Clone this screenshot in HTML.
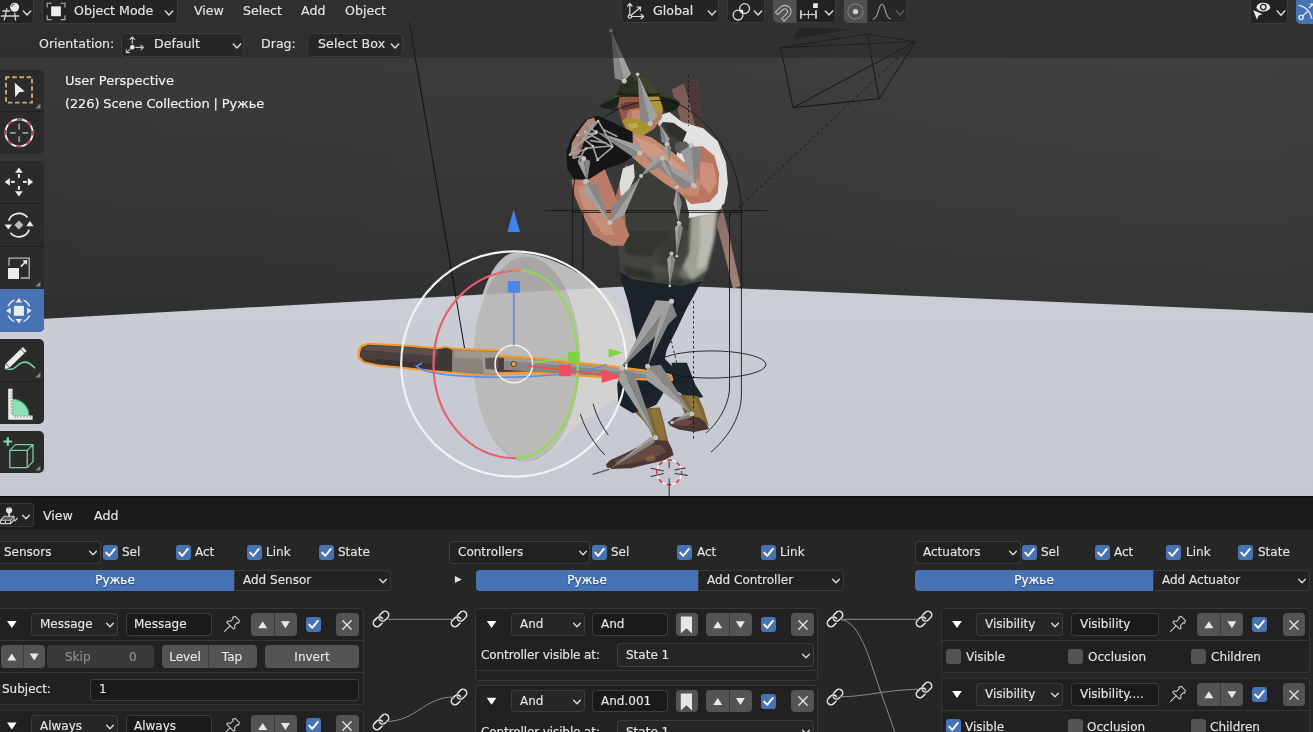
<!DOCTYPE html>
<html lang="en">
<head>
<meta charset="utf-8">
<title>UPBGE - Logic Editor</title>
<style>
html,body{margin:0;padding:0;background:#262626;}
body{width:1313px;height:732px;overflow:hidden;position:relative;font-family:"DejaVu Sans","Liberation Sans",sans-serif;font-size:12px;color:#e6e6e6;-webkit-font-smoothing:antialiased;}
.abs{position:absolute;}
#vp{position:absolute;left:0;top:0;width:1313px;height:496px;overflow:hidden;background:#333;}
#scene{position:absolute;left:0;top:0;}
#hdr{position:absolute;left:0;top:0;width:1313px;height:58px;background:rgba(38,38,38,0.55);}
.btn{position:absolute;box-sizing:border-box;background:#242424;border:1px solid #3a3a3a;border-radius:4px;height:24px;top:-1px;}
.t{position:absolute;white-space:nowrap;line-height:16px;will-change:transform;-webkit-text-stroke:0.14px currentColor;}
.chev{position:absolute;width:8px;height:5px;}
#le{position:absolute;left:0;top:496px;width:1313px;height:236px;background:#262626;overflow:hidden;}
#lehdr{position:absolute;left:0;top:0;width:1313px;height:34px;background:#1b1b1b;border-top:2px solid #0e0e0e;box-sizing:border-box;}
</style>
</head>
<body>
<div id="vp">
<svg id="scene" width="1313" height="496" viewBox="0 0 1313 496">
<defs>
<linearGradient id="sky" x1="0" y1="0" x2="0" y2="1">
<stop offset="0" stop-color="#3e3e3e"/><stop offset="0.18" stop-color="#3d3d3d"/><stop offset="0.6" stop-color="#393939"/><stop offset="1" stop-color="#323232"/>
</linearGradient>
<linearGradient id="gnd" gradientUnits="userSpaceOnUse" x1="0" y1="285" x2="0" y2="496"><stop offset="0" stop-color="#cbced5"/><stop offset="1" stop-color="#c5c8d0"/></linearGradient>
<linearGradient id="skyx" x1="0" y1="0" x2="1" y2="0"><stop offset="0" stop-color="#000" stop-opacity="0.07"/><stop offset="0.45" stop-color="#000" stop-opacity="0.03"/><stop offset="1" stop-color="#fff" stop-opacity="0.012"/></linearGradient>
</defs>
<rect x="0" y="0" width="1313" height="330" fill="url(#sky)"/><rect x="0" y="0" width="1313" height="330" fill="url(#skyx)"/>
<polygon points="0,321.3 657,284.8 1313,313 1313,496 0,496" fill="url(#gnd)"/>
<g fill="none" stroke="#161616" stroke-width="1">
<polygon points="780.7,47.6 867.2,34.1 879.2,98.7 793.0,107.7"/>
<line x1="915.3" y1="41.6" x2="780.7" y2="47.6"/>
<line x1="915.3" y1="41.6" x2="867.2" y2="34.1"/>
<line x1="915.3" y1="41.6" x2="879.2" y2="98.7"/>
<line x1="915.3" y1="41.6" x2="793.0" y2="107.7"/>
</g>
<polygon points="798.7,28.1 851.3,29.0 792.1,39.8" fill="#262626" />
<line x1="915.3" y1="41.6" x2="729.0" y2="216.8" stroke="#161616" stroke-width="1" stroke-dasharray="3 3"/>
<line x1="729.0" y1="216.8" x2="722.0" y2="222.0" stroke="#161616" stroke-width="1" stroke-dasharray="3 3"/>
<line x1="409.3" y1="22.0" x2="464.5" y2="348.0" stroke="#101010" stroke-width="1" /><g>
<path d="M516.3 252.5 C557.3 254.1 606.5 284.1 633.6 327.9 L637.7 339.4 627.0 392.7 571.7 428.8 C559.4 446.0 547.1 459.1 532.7 462.4 C497.9 462.4 473.3 413.2 473.3 362.0 C473.3 302.5 492.5 252.5 516.3 252.5 Z" fill="#d5d3d0" stroke="none" stroke-width="1" fill-opacity="0.86"/>
<ellipse cx="526.6" cy="359.1" rx="53.3" ry="102.5" fill="#000" fill-opacity="0.115" filter="url(#soft)"/>
</g><defs><linearGradient id="rf" x1="0" y1="0" x2="0" y2="1"><stop offset="0" stop-color="#7a5a57"/><stop offset="0.45" stop-color="#84645f"/><stop offset="1" stop-color="#a08278"/></linearGradient><filter id="soft" x="-5%" y="-5%" width="110%" height="110%"><feGaussianBlur stdDeviation="0.7"/></filter><filter id="soft2" x="-10%" y="-10%" width="120%" height="120%"><feGaussianBlur stdDeviation="1.6"/></filter></defs>
<g filter="url(#soft)">
<polygon points="671.5,89.5 692,79.6 697,81.5 701,112 706,140 717,186 729,235 740.5,286 733,288.5 724,252 714,215 702,180 690,150 680,118" fill="url(#rf)"/>
<polygon points="684,83.5 692,79.6 697,81.5 701,112 706,140 712,166 704,160 696,130 690,105" fill="#3f2c2c" opacity="0.75"/>
<polygon points="620.1,272.1 702.1,279.8 696.0,291.8 686.3,309.3 676.9,329.0 667.1,348.6 662.7,366.1 632.1,366.1 636.9,342.1 633.2,318.0 625.6,294.0" fill="#1e242b" />
<polygon points="620.3,278.7 697.5,281.4 686.2,307.4 676.0,327.2 666.1,347.4 665.0,359.0 676.0,370.3 686.2,384.6 690.3,395.2 676.7,391.8 666.4,386.0 661.6,396.2 656.2,404.8 643.2,410.6 632.9,413.3 618.6,404.8 617.2,384.6 622.0,366.2 637.4,344.6 632.9,324.5 627.5,298.5" fill="#1d232a" />
<polygon points="671.5,362.7 686.9,362.7 695.4,385.0 703.3,396.9 686.9,400.3 675.0,386.7" fill="#1f252c" />
<polygon points="677.4,394.5 697.9,395.9 703.4,408.2 708.8,426.0 699.3,419.1 685.6,416.4 681.5,405.5" fill="#7d6636" />
<polygon points="685.6,395.9 693.8,395.9 699.3,408.2 704.7,420.5 696.5,417.8" fill="#94793f" opacity="0.7"/>
<polygon points="667.6,422.5 674.0,417.5 685.6,416.1 699.3,417.5 706.1,423.2 709.1,429.0 693.8,432.0 678.8,429.5 670.6,426.0" fill="#4e3532" />
<polygon points="672.0,420.5 685.6,418.4 693.8,421.9 685.6,426.0 674.7,424.6" fill="#6e504a" opacity="0.8"/>
<polygon points="635.1,412.6 648.7,407.9 659.9,407.6 664.4,424.6 668.1,441.0 661.0,445.1 654.2,441.0 650.1,430.1 643.3,420.5" fill="#7d6636" />
<polygon points="650.1,409.6 659.0,408.5 663.1,424.6 665.9,439.6 661.0,441.0 655.6,427.3" fill="#94793f" opacity="0.7"/>
<polygon points="606.1,464.2 610.5,460.1 625.5,453.3 641.9,445.1 654.2,439.9 668.1,441.0 672.0,449.2 673.6,454.9 663.8,460.4 647.4,464.2 631.0,468.3 610.5,469.1 606.7,467.2" fill="#4e3532" />
<polygon points="614.6,460.1 631.0,453.3 647.4,445.1 661.0,445.1 666.5,451.9 654.2,457.4 635.1,462.8 617.3,465.6" fill="#6e504a" opacity="0.75"/>
<polygon points="644.6,457.4 654.2,454.6 655.6,460.1 647.4,462.1" fill="#8a6d45" opacity="0.7"/>
<polygon points="620.1,210.9 625.6,195.6 722.8,195.6 721.3,208.7 717.4,224.0 711.3,254.6 703.2,280.4 682.4,285.7 654.0,282.6 632.1,279.1 620.3,272.1 618.6,243.7" fill="#43453e" />
<polygon points="662.7,195.6 722.8,195.6 721.3,208.7 713.0,213.6 699.9,215.3 682.4,208.7 669.3,204.4" fill="#d9d9d2" />
</g>
<g filter="url(#soft2)">
<polygon points="691.1,208.7 718.5,204.4 714.3,239.3 706.9,269.9 693.3,280.0 678.0,276.9 689.0,252.5" fill="#a8a89e" opacity="0.9"/>
<polygon points="699.9,215.3 715.6,210.9 712.6,243.7 706.0,265.6 696.6,269.9 699.9,243.7" fill="#c2c2ba" opacity="0.8"/>
<polygon points="623.4,213.1 651.8,208.7 669.3,230.6 651.8,256.8 625.6,254.6" fill="#30322c" opacity="0.85"/>
<polygon points="662.7,208.7 682.4,206.6 682.4,243.7 669.3,272.1 658.4,265.6" fill="#34362f" opacity="0.7"/>
<polygon points="622.3,265.6 651.8,272.1 682.4,275.4 682.4,284.2 654.0,281.3 625.6,275.4" fill="#2a2c27" opacity="0.8"/>
<polygon points="651.8,265.6 682.4,265.6 691.1,279.1 654.0,281.3" fill="#55574e" opacity="0.6"/>
</g>
<g filter="url(#soft)">
<polygon points="625.6,164.9 635.4,169.3 633.2,184.6 627.8,213.0 625.6,241.4 612.5,243.6 609.2,217.4 617.9,189.0" fill="#a96c59" />
<polygon points="654.0,117.3 669.3,112.0 682.4,122.3 703.2,128.2 717.8,141.3 726.1,162.7 727.9,183.5 724.4,203.2 714.1,213.0 691.1,217.4 673.7,220.7 662.7,226.1 625.6,226.1 625.6,199.9 632.1,173.7 647.4,151.8 662.7,132.1" fill="#e2e2e0" />
<polygon points="625.6,230.5 624.7,199.9 629.5,178.0 636.9,162.7 647.4,147.4 656.2,132.1 662.7,122.3 673.7,123.0 682.4,132.1 679.1,147.4 673.7,162.7 678.0,182.4 685.7,199.9 689.0,213.0 687.9,230.5" fill="#3b3d37" />
<polygon points="622.8,168.4 633.7,164.0 634.8,177.1 627.1,194.6 620.6,195.7 619.5,183.7" fill="#dcdcd8" />
<polygon points="662.7,122.3 673.7,123.0 686.8,132.1 682.4,143.1 669.3,134.3" fill="#2e332d" />
<polygon points="688.5,147.4 702.5,146.1 714.3,155.7 719.3,173.7 717.8,192.9 709.5,202.1 691.1,204.3 679.8,193.3 682.4,169.3" fill="#b8745f" />
<polygon points="699.9,161.6 713.4,163.8 716.5,182.4 709.5,194.4 699.9,182.4" fill="#d69a88" opacity="0.7"/>
<polygon points="629.5,131.0 651.8,137.6 673.7,152.9 691.6,169.3 701.0,183.5 697.7,196.6 682.4,194.4 664.9,183.5 647.4,170.4 632.1,157.3 624.7,151.8" fill="#c48a72" />
<polygon points="634.3,136.5 654.0,144.2 673.7,159.5 689.0,173.7 682.4,175.8 662.7,164.9 643.1,151.8" fill="#dba88f" opacity="0.55"/>
<polygon points="619.3,96.9 618.5,106.7 620.7,115.3 623.2,123.9 630.6,131.3 644.1,135.0 653.9,128.9 661.9,117.8 662.5,106.7 658.9,95.7 639.2,93.2" fill="#b47c64" />
<polygon points="619.3,96.9 618.5,106.7 620.7,115.3 623.2,123.9 626.9,126.4 626.9,114.1 630.6,106.7 641.6,101.8 639.2,95.7" fill="#94594a" />
<polygon points="620.7,104.3 630.6,101.8 641.6,102.4 641.6,107.3 630.6,109.2 622.2,110.4" fill="#6b3a34" />
<polygon points="631.8,111.6 641.6,109.2 647.8,117.8 641.6,123.9 631.8,121.5" fill="#c98f78" opacity="0.8"/>
<polygon points="649.0,95.0 658.9,94.4 662.8,104.3 662.5,112.9 656.4,114.1 651.5,106.7" fill="#b09638" />
<polygon points="622.2,120.2 626.9,117.8 636.7,119.0 645.3,121.5 651.5,123.9 649.0,131.3 642.9,135.6 633.0,133.8 625.7,128.9" fill="#a8912e" />
<polygon points="626.9,123.9 636.7,122.7 639.2,127.0 630.6,128.9" fill="#c9b45a" opacity="0.7"/>
<path d="M599.8 105.7 C604.8 100.6 612.1 96.3 618.3 94.2 L660.3 93.0 C668.7 94.4 676.1 98.1 679.8 102.8 C679.5 108.0 674.8 111.9 666.2 112.4 C662.8 109.2 661.1 101.8 659.1 96.4 L619.5 97.1 C619.0 101.8 617.3 107.5 613.4 109.4 C608.4 109.4 602.3 108.7 599.8 105.7 Z" fill="#1d2119" />
<path d="M599.8 105.7 C604.8 100.6 612.1 96.3 618.3 94.2 L660.3 93.0 C668.7 94.4 676.1 98.1 679.8 102.8 C674.8 99.6 667.5 96.9 659.1 95.9 L619.5 96.6 C613.4 98.1 606.0 101.8 599.8 105.7 Z" fill="#3a4030" />
<path d="M617.3 94.7 C619.5 84.6 625.0 77.2 630.6 75.2 C639.2 73.8 647.8 77.2 651.5 83.4 C655.2 87.7 658.9 92.2 660.3 95.0 C646.6 96.4 630.6 96.6 617.3 94.7 Z" fill="#2b3024" />
<path d="M630.6 75.5 C639.2 74.0 647.8 77.2 651.5 83.4 C655.2 87.7 658.9 92.2 660.3 95.0 C651.5 95.7 644.1 89.5 639.2 83.4 Z" fill="#3e4533" />
<path d="M617.8 92.2 C630.6 94.9 647.8 94.4 659.6 93.0 L660.3 94.9 C646.6 96.5 630.6 96.8 617.3 94.8 Z" fill="#1e2219" />
<polygon points="566.1,151.8 572.0,136.5 585.8,119.5 597.6,115.5 615.1,123.4 632.6,132.1 633.0,156.2 623.8,162.7 604.8,169.3 588.4,179.8 573.6,178.5 567.4,169.3" fill="#171717" />
<polygon points="570.4,153.7 572.0,142.8 579.7,129.7 587.3,119.8 593.9,117.6 596.0,122.0 589.5,130.8 583.5,141.7 579.7,153.7 573.1,158.1" fill="#ad8678" />
<polygon points="576.4,146.0 581.8,135.1 588.4,126.4 591.7,128.6 585.1,139.5 580.8,150.4" fill="#8d6659" opacity="0.8"/>
<polygon points="571.4,179.8 588.4,179.8 604.8,169.3 613.6,191.1 625.6,226.1 629.5,234.9 623.4,245.8 611.4,245.8 592.8,234.9 581.9,213.0 574.4,195.5" fill="#b97c66" />
<polygon points="577.5,186.8 592.8,182.4 603.7,208.6 614.6,234.9 603.7,234.9 581.9,204.3" fill="#cf9a84" opacity="0.6"/>
</g><g>
<polygon points="359.0,357.4 358.8,351.9 361.2,346.7 367.8,344.0 404.8,345.9 437.7,348.6 446.0,347.3 452.1,348.9 498.1,350.8 499.2,356.3 532.7,358.3 569.6,362.4 606.5,366.1 643.4,370.6 670.5,374.7 672.1,380.0 643.4,379.2 606.5,377.1 569.6,374.7 532.7,372.6 497.4,373.6 495.3,375.2 473.4,374.1 451.5,372.0 437.7,371.1 404.8,367.8 377.4,365.1 363.7,362.1" fill="#4a3f3d" stroke="#f2982c" stroke-width="2.6" stroke-linejoin="round"/>
<polygon points="359.6,356.0 361.7,347.8 368.1,344.8 404.8,346.6 437.7,349.3 437.7,370.6 404.8,367.0 377.4,364.3 364.3,361.3" fill="#4a3f3d" />
<polygon points="362.3,349.2 368.1,345.4 404.8,347.0 437.7,349.7 437.7,356.0 404.8,353.3 370.6,350.6" fill="#625452" opacity="0.8"/>
<polygon points="364.3,361.0 377.4,364.0 404.8,366.7 437.7,370.3 437.7,364.3 404.8,361.3 377.4,358.8" fill="#382f2e" opacity="0.8"/>
<polygon points="437.7,349.2 446.0,347.8 452.1,349.5 452.1,371.7 437.7,370.6" fill="#3d3937" />
<polygon points="452.1,349.5 498.1,351.4 498.6,356.3 496.7,373.3 495.1,374.7 473.4,373.6 452.1,371.7" fill="#8a847f" />
<polygon points="454.2,350.6 496.7,352.2 497.4,359.5 454.2,357.4" fill="#a39d96" opacity="0.8"/>
<polygon points="481.6,352.6 498.1,351.9 496.7,374.1 483.7,373.6" fill="#a49c92" />
<polygon points="485.0,358.1 498.1,357.4 497.4,369.8 485.7,368.9" fill="#5e5955" />
<polygon points="504.0,357.4 532.7,359.5 569.6,363.6 606.5,367.3 643.4,371.8 670.5,375.9 671.3,378.8 643.4,377.9 606.5,375.9 569.6,373.4 532.7,371.4 504.0,369.7" fill="#878787" />
<polygon points="504.0,357.4 532.7,359.5 569.6,363.6 606.5,367.3 643.4,371.8 670.5,375.9 670.5,377.1 643.4,374.3 606.5,370.2 569.6,366.5 532.7,362.8 504.0,360.7" fill="#a3a3a3" opacity="0.8"/>
</g>
<g fill="none" stroke-linecap="butt">
<path d="M422.0 363.2 L416.3 366.1 C426.1 375.5 475.3 377.9 512.2 377.1 C553.2 376.3 586.0 372.2 606.5 364.8" fill="none" stroke="#5b8ee6" stroke-width="1.7" />
<path d="M520.4 270.5 C 470 270.5 433.5 312 433.5 364 C 433.5 416 468 458.3 516.3 458.3" stroke="#e8606c" stroke-width="2.2"/>
<path d="M520.4 270.5 C 556 272 577.8 314 577.8 364 C 577.8 414 552 457 516.3 458.3" stroke="#8ddb52" stroke-width="2.2"/>
<path d="M512 270.7 L521.5 270.5" stroke="#f08a5a" stroke-width="2.2"/>
<circle cx="513.8" cy="364" r="112.6" stroke="#f2f2f2" stroke-width="2.2"/>
<circle cx="513.8" cy="364" r="18.8" stroke="#f2f2f2" stroke-width="1.6"/>
</g>
<line x1="513.8" y1="345.4" x2="513.8" y2="292.0" stroke="#5b8ee6" stroke-width="1.7" />
<rect x="507.8" y="281" width="12.2" height="11.6" fill="#4b86ea"/>
<polygon points="513.6,209.6 520.0,232 507.4,232" fill="#3f82f0"/>
<line x1="532.7" y1="362.4" x2="568.0" y2="358.3" stroke="#8ddb52" stroke-width="1.5" />
<rect x="568.0" y="351.7" width="11.5" height="11" fill="#7fd33f"/>
<polygon points="608.6,348.4 622.9,352.5 608.6,357.4" fill="#7fd33f"/>
<line x1="526.6" y1="365.6" x2="602.4" y2="374.7" stroke="#e8505e" stroke-width="1.7" />
<rect x="558.9" y="364.8" width="12" height="11.4" fill="#ee4d5f"/>
<polygon points="601.6,368.9 621.3,377.1 601.6,382.9" fill="#ee4d5f"/>
<circle cx="513.8" cy="364" r="2.6" fill="#f5a23a" stroke="#2a2a2a" stroke-width="0.8"/><g fill="none" stroke="#161616" stroke-width="1" stroke-opacity="0.88">
<path d="M572.6 265.5 V 205 C 572.6 160 592 122 618 108"/>
<path d="M583 269 V 212"/>
<path d="M665 100.4 C 690 103 722 135 734 170 C 740 188 741.4 200 741.4 215 V 395 C 741 420 725 440 711 452"/>
<path d="M729.5 212 V 390 C 728 408 716 425 706 433"/>
<path d="M609 114.6 C 625 104 645 100 665 100.4" stroke-opacity="0.8"/>
<path d="M545.3 210.6 H 767.4"/>
<path d="M572.6 212.4 H 741.4"/>
<ellipse cx="711" cy="364.5" rx="55" ry="13.6"/>
<path d="M580.3 414.0 C 586.1 431.1 594.7 444.7 604.9 455.0"/>
<path d="M593.0 403.7 C 596.4 415.7 601.5 425.9 608.3 435.2"/>
<path d="M693.5 301 V 441" stroke-dasharray="2.5 2.5"/>
<path d="M657.9 287.6 L 676.7 362.7" stroke-dasharray="2.5 2.5"/>
<path d="M688.5 75 V 126" stroke-dasharray="2.5 2.5"/>
</g>
<polygon points="624.2,81.1 631.1,74.1 611.0,30.7" fill="#a0a0a0"/>
<polygon points="624.2,81.1 614.8,78.4 611.0,30.7" fill="#868686"/>
<circle cx="624.2" cy="81.1" r="2.5" fill="#c2c2c2"/>
<circle cx="611.0" cy="30.7" r="1.8" fill="#c4c4c4"/>
<polygon points="650.1,123.4 657.6,116.4 637.6,74.2" fill="#a0a0a0"/>
<polygon points="650.1,123.4 640.1,120.9 637.6,74.2" fill="#868686"/>
<circle cx="650.1" cy="123.4" r="2.5" fill="#c2c2c2"/>
<circle cx="637.6" cy="74.2" r="1.8" fill="#c4c4c4"/>
<polygon points="667.1,144.2 669.8,138.9 659.5,123.4" fill="#a0a0a0"/>
<polygon points="667.1,144.2 661.6,141.9 659.5,123.4" fill="#868686"/>
<circle cx="667.1" cy="144.2" r="2.5" fill="#c2c2c2"/>
<circle cx="659.5" cy="123.4" r="1.8" fill="#c4c4c4"/>
<polygon points="676.8,187.0 673.5,203.2 678.5,222.5" fill="#a0a0a0"/>
<polygon points="676.8,187.0 681.6,202.7 678.5,222.5" fill="#868686"/>
<circle cx="676.8" cy="187.0" r="2.0" fill="#c2c2c2"/>
<circle cx="678.5" cy="222.5" r="1.4" fill="#c4c4c4"/>
<polygon points="679.3,223.2 674.9,226.9 676.8,256.2" fill="#a0a0a0"/>
<polygon points="679.3,223.2 683.0,227.5 676.8,256.2" fill="#868686"/>
<circle cx="679.3" cy="223.2" r="2.0" fill="#c2c2c2"/>
<circle cx="676.8" cy="256.2" r="1.4" fill="#c4c4c4"/>
<polygon points="671.5,253.4 667.2,259.0 669.8,285.9" fill="#a0a0a0"/>
<polygon points="671.5,253.4 675.3,259.5 669.8,285.9" fill="#868686"/>
<circle cx="671.5" cy="253.4" r="2.0" fill="#c2c2c2"/>
<circle cx="669.8" cy="285.9" r="1.4" fill="#c4c4c4"/>
<polygon points="667.1,144.2 663.8,147.9 669.3,162.7" fill="#a0a0a0"/>
<polygon points="667.1,144.2 671.2,147.1 669.3,162.7" fill="#868686"/>
<circle cx="667.1" cy="144.2" r="2.0" fill="#c2c2c2"/>
<circle cx="669.3" cy="162.7" r="1.4" fill="#c4c4c4"/>
<polygon points="675.4,143.1 685.7,141.3 691.1,146.3 689.0,151.8 679.1,153.6 674.8,149.6" fill="#5c5c5c" />
<polygon points="691.1,145.2 681.0,151.2 695.1,186.8" fill="#9a9a9a"/>
<polygon points="691.1,145.2 702.2,149.2 695.1,186.8" fill="#858585"/>
<circle cx="691.1" cy="145.2" r="2.5" fill="#c2c2c2"/>
<circle cx="695.1" cy="186.8" r="1.8" fill="#c4c4c4"/>
<polygon points="693.3,185.0 693.1,175.4 640.4,152.9" fill="#a0a0a0"/>
<polygon points="693.3,185.0 684.7,189.3 640.4,152.9" fill="#868686"/>
<circle cx="693.3" cy="185.0" r="2.5" fill="#c2c2c2"/>
<circle cx="640.4" cy="152.9" r="1.8" fill="#c4c4c4"/>
<polygon points="662.7,158.4 655.3,157.1 640.9,175.8" fill="#a0a0a0"/>
<polygon points="662.7,158.4 662.3,165.9 640.9,175.8" fill="#868686"/>
<circle cx="662.7" cy="158.4" r="2.5" fill="#c2c2c2"/>
<circle cx="640.9" cy="175.8" r="1.8" fill="#c4c4c4"/>
<polygon points="662.7,158.4 661.9,165.2 676.9,186.8" fill="#a0a0a0"/>
<polygon points="662.7,158.4 668.6,161.8 676.9,186.8" fill="#868686"/>
<circle cx="662.7" cy="158.4" r="1.7" fill="#c2c2c2"/>
<circle cx="676.9" cy="186.8" r="1.2" fill="#c4c4c4"/>
<polygon points="639.8,152.9 639.6,145.2 596.1,131.7" fill="#a0a0a0"/>
<polygon points="639.8,152.9 633.6,157.6 596.1,131.7" fill="#868686"/>
<circle cx="639.8" cy="152.9" r="2.5" fill="#c2c2c2"/>
<circle cx="596.1" cy="131.7" r="1.8" fill="#c4c4c4"/>
<polygon points="583.6,158.4 578.0,162.8 587.3,181.3" fill="#a0a0a0"/>
<polygon points="583.6,158.4 590.3,160.8 587.3,181.3" fill="#868686"/>
<circle cx="583.6" cy="158.4" r="2.5" fill="#c2c2c2"/>
<circle cx="587.3" cy="181.3" r="1.8" fill="#c4c4c4"/>
<polygon points="585.5,181.6 583.5,192.8 610.0,222.5" fill="#a0a0a0"/>
<polygon points="585.5,181.6 596.3,185.1 610.0,222.5" fill="#868686"/>
<circle cx="585.5" cy="181.6" r="2.5" fill="#c2c2c2"/>
<circle cx="610.0" cy="222.5" r="1.8" fill="#c4c4c4"/>
<polygon points="610.0,222.5 624.1,215.1 641.2,176.3" fill="#a0a0a0"/>
<polygon points="610.0,222.5 611.6,206.6 641.2,176.3" fill="#868686"/>
<circle cx="610.0" cy="222.5" r="2.5" fill="#c2c2c2"/>
<circle cx="641.2" cy="176.3" r="1.8" fill="#c4c4c4"/>
<g stroke="#a0a0a0" stroke-width="1.7" stroke-linecap="round">
<line x1="569.8" y1="154.8" x2="598.2" y2="120.9"/>
<line x1="598.2" y1="120.9" x2="612.4" y2="146.0"/>
<line x1="585.1" y1="131.8" x2="612.4" y2="147.1"/>
<line x1="586.2" y1="148.2" x2="611.3" y2="146.0"/>
<line x1="597.1" y1="160.2" x2="612.4" y2="147.1"/>
<line x1="577.5" y1="135.1" x2="597.1" y2="132.9"/>
<line x1="570.9" y1="153.7" x2="586.2" y2="149.3"/>
<line x1="579.7" y1="142.8" x2="596.0" y2="132.9"/>
<line x1="581.8" y1="137.3" x2="592.8" y2="146.0"/>
<line x1="588.4" y1="124.2" x2="596.0" y2="133.5"/>
<line x1="574.2" y1="148.2" x2="588.4" y2="136.2"/>
<line x1="598.2" y1="120.9" x2="585.1" y2="131.8"/>
<line x1="592.8" y1="146.0" x2="597.7" y2="160.2"/>
<line x1="578.6" y1="161.3" x2="585.1" y2="148.2"/>
<line x1="603.7" y1="129.7" x2="616.8" y2="136.2"/>
<line x1="573.1" y1="158.1" x2="581.8" y2="155.9"/>
<line x1="590.6" y1="140.6" x2="605.9" y2="142.8"/>
</g>
<g fill="#d2d2d2">
<circle cx="598.2" cy="120.9" r="1.1"/>
<circle cx="596.0" cy="132.9" r="1.1"/>
<circle cx="612.4" cy="146.6" r="1.1"/>
<circle cx="586.2" cy="148.8" r="1.1"/>
<circle cx="569.8" cy="154.8" r="1.1"/>
<circle cx="585.1" cy="131.8" r="1.1"/>
<circle cx="597.7" cy="160.2" r="1.1"/>
<circle cx="577.5" cy="135.3" r="1.1"/>
<circle cx="592.8" cy="146.0" r="1.1"/>
</g>
<polygon points="671.5,301.2 655.9,300.2 622.0,367.9" fill="#a0a0a0"/>
<polygon points="671.5,301.2 677.0,315.9 622.0,367.9" fill="#828282"/>
<circle cx="671.5" cy="301.2" r="2.5" fill="#c2c2c2"/>
<circle cx="622.0" cy="367.9" r="1.8" fill="#c4c4c4"/>
<polygon points="671.5,301.2 662.5,307.7 647.6,366.2" fill="#a0a0a0"/>
<polygon points="671.5,301.2 674.2,312.0 647.6,366.2" fill="#868686"/>
<circle cx="671.5" cy="301.2" r="2.5" fill="#c2c2c2"/>
<circle cx="647.6" cy="366.2" r="1.8" fill="#c4c4c4"/>
<polygon points="622.0,367.9 618.2,380.1 656.2,437.9" fill="#a0a0a0"/>
<polygon points="622.0,367.9 634.0,372.4 656.2,437.9" fill="#868686"/>
<circle cx="622.0" cy="367.9" r="2.5" fill="#c2c2c2"/>
<circle cx="656.2" cy="437.9" r="1.8" fill="#c4c4c4"/>
<polygon points="647.6,366.2 645.2,379.1 692.0,414.0" fill="#a0a0a0"/>
<polygon points="647.6,366.2 660.7,364.7 692.0,414.0" fill="#868686"/>
<circle cx="647.6" cy="366.2" r="2.5" fill="#c2c2c2"/>
<circle cx="692.0" cy="414.0" r="1.8" fill="#c4c4c4"/>
<polygon points="655.6,437.6 650.3,437.0 609.1,469.4" fill="#a0a0a0"/>
<polygon points="655.6,437.6 654.2,442.7 609.1,469.4" fill="#868686"/>
<circle cx="655.6" cy="437.6" r="2.5" fill="#c2c2c2"/>
<circle cx="609.1" cy="469.4" r="1.8" fill="#c4c4c4"/>
<line x1="609.1" y1="469.4" x2="592.7" y2="474.4" stroke="#555" stroke-width="1.2" />
<polygon points="691.8,413.7 687.5,412.1 672.0,422.5" fill="#a0a0a0"/>
<polygon points="691.8,413.7 690.1,417.8 672.0,422.5" fill="#868686"/>
<circle cx="691.8" cy="413.7" r="2.5" fill="#c2c2c2"/>
<circle cx="672.0" cy="422.5" r="1.8" fill="#c4c4c4"/>
<circle cx="669.2" cy="472.4" r="12.4" fill="none" stroke="#f4f4f4" stroke-width="1.5"/>
<circle cx="669.2" cy="472.4" r="12.4" fill="none" stroke="#e02432" stroke-width="1.5" stroke-dasharray="4.87 4.87" stroke-dashoffset="2.4"/>
<path d="M669.2 461.5 L669.2 468.3 M669.2 478.5 L669.2 496.3 M650.8 468.3 L663.8 471.0 M650.8 476.5 L663.8 473.5 M674.7 469.9 L685.6 468.0 M674.7 473.5 L687.7 475.4 " stroke="#3a3a3a" stroke-width="1.1" fill="none"/>
</svg>
<div id="hdr"></div>
<div class="abs" style="left:-4.0px;top:-4.0px;width:38.3px;height:27.5px;background:#242424;border-radius:5px;box-shadow:inset 0 0 0 1px #3c3c3c;"></div>
<svg class="abs" style="left:0.0px;top:0.0px" width="24" height="24" viewBox="0 0 24 24"><g stroke="#d0d0d0" stroke-width="1.3" stroke-linecap="round" fill="none">
<path d="M2.8 11 H9.6 M1.4 16 H18.8 M6.8 8.6 L4.3 19.8 M14.7 13.2 L15.5 19.8"/></g>
<circle cx="14.6" cy="7.3" r="4.5" fill="#e9e9e9"/>
<path d="M11.6 6.4 A3.2 3.2 0 0 1 14.2 4" fill="none" stroke="#2a2a2a" stroke-width="0.9" stroke-linecap="round"/></svg>
<svg class="abs" style="left:20.7px;top:7.8px" width="12" height="10" viewBox="-6 -5 12 10"><path d="M-3.70 -2.00 L0 2.00 L3.70 -2.00" fill="none" stroke="#dddddd" stroke-width="1.4" stroke-linecap="round" stroke-linejoin="round"/></svg>
<div class="abs" style="left:41.5px;top:-4.0px;width:136.1px;height:27.5px;background:#242424;border-radius:5px;box-shadow:inset 0 0 0 1px #3c3c3c;"></div>
<svg class="abs" style="left:44.0px;top:0.0px" width="24" height="24" viewBox="0 0 24 24"><rect x="7.1" y="6.4" width="9.8" height="9.8" fill="#ececec"/>
<g stroke="#b4b4b4" stroke-width="1.1" fill="none"><path d="M3.2 7.6 V3.3 H7.6 M16.6 3.3 H21 V7.6 M21 15.2 V19.6 H16.6 M7.6 19.6 H3.2 V15.2"/></g></svg>
<div class="t" style="left:74.4px;top:3.2px;color:#e6e6e6;font-size:12.6px">Object Mode</div>
<svg class="abs" style="left:162.9px;top:7.6px" width="12" height="10" viewBox="-6 -5 12 10"><path d="M-3.70 -2.00 L0 2.00 L3.70 -2.00" fill="none" stroke="#dddddd" stroke-width="1.4" stroke-linecap="round" stroke-linejoin="round"/></svg>
<div class="t" style="left:193.6px;top:3.2px;color:#e6e6e6;font-size:12.6px">View</div>
<div class="t" style="left:242.8px;top:3.2px;color:#e6e6e6;font-size:12.6px">Select</div>
<div class="t" style="left:300.8px;top:3.2px;color:#e6e6e6;font-size:12.6px">Add</div>
<div class="t" style="left:345.0px;top:3.2px;color:#e6e6e6;font-size:12.6px">Object</div>
<div class="abs" style="left:621.0px;top:-4.0px;width:97.9px;height:27.3px;background:#242424;border-radius:5px;box-shadow:inset 0 0 0 1px #3c3c3c;"></div>
<svg class="abs" style="left:622.0px;top:0.0px" width="26" height="24" viewBox="0 0 26 24"><g stroke="#dcdcdc" stroke-width="1.2" fill="none" stroke-linecap="round" stroke-linejoin="round">
<circle cx="7.8" cy="16.5" r="1.7"/>
<path d="M7.8 14.6 V3.6 M5.6 6 L7.8 3.4 L10 6"/>
<path d="M9.7 16.5 H21.4 M19 14.3 L21.6 16.5 L19 18.7"/>
<path d="M9.1 15.2 L18.4 7.3 M15 7 L18.6 7.1 L18.3 10.6"/></g></svg>
<div class="t" style="left:653.4px;top:3.3px;color:#e6e6e6;font-size:12.6px">Global</div>
<svg class="abs" style="left:705.8px;top:7.5px" width="12" height="10" viewBox="-6 -5 12 10"><path d="M-3.70 -2.00 L0 2.00 L3.70 -2.00" fill="none" stroke="#dddddd" stroke-width="1.4" stroke-linecap="round" stroke-linejoin="round"/></svg>
<div class="abs" style="left:726.8px;top:-4.0px;width:38.0px;height:27.3px;background:#242424;border-radius:5px;box-shadow:inset 0 0 0 1px #3c3c3c;"></div>
<svg class="abs" style="left:728.0px;top:0.0px" width="24" height="24" viewBox="0 0 24 24"><g stroke="#dcdcdc" stroke-width="1.3" fill="none"><circle cx="10" cy="15.1" r="4.9"/><circle cx="16.6" cy="8.6" r="4.9"/></g><circle cx="13.6" cy="11.3" r="1.7" fill="#ececec"/></svg>
<svg class="abs" style="left:751.5px;top:7.5px" width="12" height="10" viewBox="-6 -5 12 10"><path d="M-3.70 -2.00 L0 2.00 L3.70 -2.00" fill="none" stroke="#dddddd" stroke-width="1.4" stroke-linecap="round" stroke-linejoin="round"/></svg>
<div class="abs" style="left:772.9px;top:-4.0px;width:23.3px;height:26.8px;background:#505050;border-radius:5px;border-top-right-radius:0;border-bottom-right-radius:0;"></div>
<svg class="abs" style="left:773.0px;top:0.0px" width="24" height="24" viewBox="0 0 24 24"><g transform="rotate(45 11.6 11.6)"><path d="M5.6 18.6 V11.4 A6.2 6.2 0 0 1 18 11.4 V18.6 H14.6 V11.6 A2.8 2.8 0 0 0 9 11.6 V18.6 Z" fill="none" stroke="#bdbdbd" stroke-width="1.1" stroke-linejoin="round"/></g></svg>
<div class="abs" style="left:796.2px;top:-4.0px;width:40.0px;height:26.8px;background:#222222;border-radius:5px;box-shadow:inset 0 0 0 1px #3c3c3c;border-top-left-radius:0;border-bottom-left-radius:0;"></div>
<svg class="abs" style="left:797.0px;top:0.0px" width="24" height="24" viewBox="0 0 24 24"><g stroke="#c4c4c4" fill="none"><path d="M3.9 10.2 V18.8 M19 10.2 V18.8" stroke-width="1.9"/><path d="M3.8 14.5 H19.2" stroke-width="1.1"/><path d="M11.45 10.4 V18.6" stroke-width="1.2"/><path d="M7.7 13.2 V15.8 M15.2 13.2 V15.8" stroke-width="0.9"/></g><rect x="16.1" y="3.3" width="4.7" height="4.7" fill="#ececec"/></svg>
<svg class="abs" style="left:822.6px;top:7.8px" width="12" height="10" viewBox="-6 -5 12 10"><path d="M-3.70 -2.00 L0 2.00 L3.70 -2.00" fill="none" stroke="#dddddd" stroke-width="1.4" stroke-linecap="round" stroke-linejoin="round"/></svg>
<div class="abs" style="left:843.8px;top:-4.0px;width:23.6px;height:26.8px;background:#505050;border-radius:5px;border-top-right-radius:0;border-bottom-right-radius:0;"></div>
<svg class="abs" style="left:844.0px;top:0.0px" width="24" height="24" viewBox="0 0 24 24"><circle cx="11.5" cy="11.6" r="7.6" fill="none" stroke="#7e7e7e" stroke-width="1.1"/><circle cx="11.5" cy="11.6" r="2.7" fill="#cfcfcf"/></svg>
<div class="abs" style="left:867.4px;top:-4.0px;width:39.5px;height:26.8px;background:#272727;border-radius:5px;box-shadow:inset 0 0 0 1px #383838;border-top-left-radius:0;border-bottom-left-radius:0;"></div>
<svg class="abs" style="left:868.0px;top:0.0px" width="28" height="24" viewBox="0 0 28 24"><path d="M5.4 18.9 C10.6 18.6 10.4 4.2 13.9 4.2 C17.4 4.2 17.2 18.6 22.4 18.9" fill="none" stroke="#9a9a9a" stroke-width="1.2" stroke-linecap="round"/></svg>
<svg class="abs" style="left:893.6px;top:7.6px" width="12" height="10" viewBox="-6 -5 12 10"><path d="M-3.70 -2.00 L0 2.00 L3.70 -2.00" fill="none" stroke="#5a5a5a" stroke-width="1.4" stroke-linecap="round" stroke-linejoin="round"/></svg>
<div class="abs" style="left:1249.8px;top:-4.0px;width:38.7px;height:27.5px;background:#222222;border-radius:5px;box-shadow:inset 0 0 0 1px #3c3c3c;"></div>
<svg class="abs" style="left:1250.0px;top:0.0px" width="24" height="24" viewBox="0 0 24 24"><ellipse cx="13.3" cy="7.2" rx="6.8" ry="4.4" fill="#ececec"/><circle cx="13.3" cy="7" r="2.7" fill="none" stroke="#222" stroke-width="1.3"/>
<path d="M2.9 10 L12.8 14.1 L8.6 15.8 L7 20.1 Z" fill="#ececec" stroke="#222" stroke-width="0.3"/></svg>
<svg class="abs" style="left:1274.8px;top:7.7px" width="12" height="10" viewBox="-6 -5 12 10"><path d="M-3.90 -2.20 L0 2.20 L3.90 -2.20" fill="none" stroke="#dddddd" stroke-width="1.4" stroke-linecap="round" stroke-linejoin="round"/></svg>
<div class="abs" style="left:1295.8px;top:-4.0px;width:29.2px;height:27.5px;background:#4772b3;border-radius:5px;"></div>
<svg class="abs" style="left:1296.0px;top:0.0px" width="17" height="24" viewBox="0 0 17 24"><g stroke="#e8eefc" stroke-width="1.3" fill="none" stroke-linecap="round"><path d="M3 5.3 C9.6 6.4 14 11 15.8 18.4"/><circle cx="5.1" cy="17.5" r="2.1"/><path d="M6.7 16 L11.4 11.6"/><path d="M14.4 4.2 H17.5 M13.4 7.6 L17 4.4"/></g></svg>
<div class="t" style="left:39.3px;top:36.0px;color:#e6e6e6;font-size:12.6px">Orientation:</div>
<div class="abs" style="left:120.9px;top:32.5px;width:123.6px;height:24.1px;background:#272727;border-radius:5px;box-shadow:inset 0 0 0 1px #3c3c3c;"></div>
<svg class="abs" style="left:121.0px;top:32.0px" width="26" height="26" viewBox="0 0 26 26"><circle cx="11.3" cy="15.2" r="2.3" fill="#ececec"/><g stroke="#c8c8c8" stroke-width="1.1" fill="none" stroke-linecap="round" stroke-linejoin="round">
<path d="M11.3 11.6 V5.2 M9 7.4 L11.3 4.9 L13.6 7.4"/><path d="M14.9 15.4 H22.2 M20 13.2 L22.4 15.4 L20 17.6"/><path d="M9.2 17.2 L5.6 20.4 M5.4 17.6 L5.4 20.6 L8.4 20.6"/></g></svg>
<div class="t" style="left:153.7px;top:36.1px;color:#e6e6e6;font-size:12.6px">Default</div>
<svg class="abs" style="left:230.8px;top:41.0px" width="12" height="10" viewBox="-6 -5 12 10"><path d="M-3.70 -2.00 L0 2.00 L3.70 -2.00" fill="none" stroke="#dddddd" stroke-width="1.4" stroke-linecap="round" stroke-linejoin="round"/></svg>
<div class="t" style="left:261.2px;top:36.0px;color:#e6e6e6;font-size:12.6px">Drag:</div>
<div class="abs" style="left:307.0px;top:32.5px;width:95.6px;height:24.1px;background:#272727;border-radius:5px;box-shadow:inset 0 0 0 1px #3c3c3c;"></div>
<div class="t" style="left:317.8px;top:36.1px;font-size:12.6px;letter-spacing:0.1px">Select Box</div>
<svg class="abs" style="left:388.6px;top:41.0px" width="12" height="10" viewBox="-6 -5 12 10"><path d="M-3.70 -2.00 L0 2.00 L3.70 -2.00" fill="none" stroke="#dddddd" stroke-width="1.4" stroke-linecap="round" stroke-linejoin="round"/></svg>
<div class="t" style="left:65.0px;top:72.9px;color:#f4f4f4;font-size:13px">User Perspective</div>
<div class="t" style="left:65px;top:96px;color:#f4f4f4;font-size:13px;letter-spacing:-0.12px">(226) Scene Collection | Ружье</div>
<div class="abs" style="left:0.0px;top:69.6px;width:43.6px;height:84.2px;background:#2b2b2b;border-radius:0 5px 5px 0;"></div>
<div class="abs" style="left:0.0px;top:111.2px;width:43.6px;height:1.0px;background:#1f1f1f;border-radius:0;"></div>
<svg class="abs" style="left:0.0px;top:70.0px" width="44" height="42" viewBox="0 0 44 42"><rect x="6" y="7.2" width="26" height="25.4" fill="none" stroke="#c9a96e" stroke-width="1.9" stroke-dasharray="4.6 2.6" stroke-dashoffset="1"/>
<path d="M14.8 12.8 L24.8 21.6 L19.3 22.3 L15.2 27.2 Z" fill="#ececec"/></svg>
<svg class="abs" style="left:34.6px;top:103.2px" width="6" height="6" viewBox="0 0 6 6"><polygon points="5.4,0.4 5.4,5.4 0.4,5.4" fill="#8a8a8a"/></svg>
<svg class="abs" style="left:0.0px;top:112.0px" width="44" height="42" viewBox="0 0 44 42"><circle cx="19.1" cy="20.8" r="13.6" fill="none" stroke="#f0f0f0" stroke-width="1.9"/>
<circle cx="19.1" cy="20.8" r="13.6" fill="none" stroke="#b5424d" stroke-width="1.9" stroke-dasharray="5.34 5.34" stroke-dashoffset="2.6"/>
<path d="M19.1 11.6 V17.4 M19.1 24.2 V30 M9.9 20.8 H15.7 M22.5 20.8 H28.3" stroke="#9a9a9a" stroke-width="1.7"/></svg>
<div class="abs" style="left:0.0px;top:161.0px;width:43.6px;height:171.0px;background:#2b2b2b;border-radius:0 5px 5px 0;"></div>
<div class="abs" style="left:0.0px;top:202.6px;width:43.6px;height:1.0px;background:#1f1f1f;border-radius:0;"></div>
<div class="abs" style="left:0.0px;top:245.6px;width:43.6px;height:1.0px;background:#1f1f1f;border-radius:0;"></div>
<svg class="abs" style="left:0.0px;top:161.0px" width="44" height="42" viewBox="0 0 44 42"><g fill="#ececec"><polygon points="18.9,6.6 22.8,11.8 15,11.8"/><polygon points="18.9,35.4 22.8,30.2 15,30.2"/><polygon points="4.6,20.9 9.9,17 9.9,24.8"/><polygon points="33.2,20.9 27.9,17 27.9,24.8"/>
<rect x="17.9" y="13" width="2" height="3.8"/><rect x="17.9" y="25" width="2" height="3.8"/><rect x="11" y="19.9" width="3.8" height="2"/><rect x="23" y="19.9" width="3.8" height="2"/></g></svg>
<svg class="abs" style="left:0.0px;top:203.0px" width="44" height="43" viewBox="0 0 44 43"><g fill="none" stroke="#ececec" stroke-width="1.7"><path d="M8.6 17.6 A11 11 0 0 1 27.4 14.4"/><path d="M29.2 26.6 A11 11 0 0 1 10.4 29.8"/></g>
<polygon points="4.6,21.4 12,21.4 8.3,26.6" fill="#ececec"/><polygon points="26.2,23.2 33.6,23.2 29.9,18" fill="#ececec"/>
<polygon points="18.9,17.6 23.4,22.1 18.9,26.6 14.4,22.1" fill="#bdbdbd"/></svg>
<svg class="abs" style="left:0.0px;top:246.0px" width="44" height="43" viewBox="0 0 44 43"><path d="M9.1 20 V12.2 H29.2 V32 H20.6" fill="none" stroke="#b8b8b8" stroke-width="1.3"/><rect x="8" y="22" width="11" height="11" fill="#ececec"/>
<path d="M20.8 20.6 L25.6 15.8" stroke="#ececec" stroke-width="1.6"/><polygon points="27.2,14 27,19 22.4,14.4" fill="#ececec"/></svg>
<svg class="abs" style="left:34.6px;top:280.6px" width="6" height="6" viewBox="0 0 6 6"><polygon points="5.4,0.4 5.4,5.4 0.4,5.4" fill="#8a8a8a"/></svg>
<div class="abs" style="left:0.0px;top:289.4px;width:43.6px;height:42.6px;background:#4772b3;border-radius:0 0 5px 0;"></div>
<svg class="abs" style="left:0.0px;top:289.0px" width="44" height="43" viewBox="0 0 44 43"><circle cx="18.9" cy="21.8" r="11.6" fill="none" stroke="#dfe7f7" stroke-width="1.5"/>
<g fill="#4772b3"><rect x="14.4" y="8" width="9" height="6"/><rect x="14.4" y="29.6" width="9" height="6"/><rect x="5" y="17.3" width="6" height="9"/><rect x="26.8" y="17.3" width="6" height="9"/></g>
<g fill="#e8eefb"><polygon points="18.9,9 22.2,13.6 15.6,13.6"/><polygon points="18.9,34.6 22.2,30 15.6,30"/><polygon points="6.1,21.8 10.7,18.5 10.7,25.1"/><polygon points="31.7,21.8 27.1,18.5 27.1,25.1"/></g>
<rect x="13.9" y="16.8" width="10" height="10" fill="#ececec"/></svg>
<div class="abs" style="left:0.0px;top:338.6px;width:43.6px;height:85.8px;background:#2b2b2b;border-radius:0 5px 5px 0;"></div>
<div class="abs" style="left:0.0px;top:380.8px;width:43.6px;height:1.0px;background:#1f1f1f;border-radius:0;"></div>
<svg class="abs" style="left:0.0px;top:339.0px" width="44" height="42" viewBox="0 0 44 42"><path d="M5.6 29.6 C12 31.6 14.5 29.5 18.5 25.8 C22.6 22 27.6 21.4 34.4 28.6" fill="none" stroke="#7fd6a8" stroke-width="1.5" stroke-linecap="round"/>
<g transform="rotate(-44 5.4 28.6)"><rect x="8.6" y="26" width="20.4" height="5.4" fill="#ececec"/><polygon points="4.2,28.7 8.2,26 8.2,31.4" fill="#ececec"/><rect x="29.6" y="26" width="2.6" height="5.4" fill="#ececec"/></g></svg>
<svg class="abs" style="left:34.6px;top:372.4px" width="6" height="6" viewBox="0 0 6 6"><polygon points="5.4,0.4 5.4,5.4 0.4,5.4" fill="#8a8a8a"/></svg>
<svg class="abs" style="left:0.0px;top:382.0px" width="44" height="42" viewBox="0 0 44 42"><path d="M12.6 17.4 A 16.2 16.2 0 0 1 28.8 33.6 H12.6 Z" fill="#8fe0b4" stroke="#52b584" stroke-width="1.2"/>
<path d="M8.2 6.8 H12.6 V33.6 H32.6 V37.8 H8.2 Z" fill="#ececec"/>
<g stroke="#555" stroke-width="0.6"><path d="M10.4 10 H12.6 M10.4 13 H12.6 M10.4 16 H12.6 M10.4 19 H12.6 M10.4 22 H12.6 M10.4 25 H12.6 M10.4 28 H12.6 M10.4 31 H12.6 M15 33.6 V35.8 M18 33.6 V35.8 M21 33.6 V35.8 M24 33.6 V35.8 M27 33.6 V35.8 M30 33.6 V35.8"/></g></svg>
<div class="abs" style="left:0.0px;top:430.6px;width:43.6px;height:42.8px;background:#2b2b2b;border-radius:0 5px 5px 0;"></div>
<svg class="abs" style="left:0.0px;top:431.0px" width="44" height="42" viewBox="0 0 44 42"><g fill="none" stroke="#7bcfa2" stroke-width="1.3" stroke-linejoin="round"><path d="M9.8 19.4 H27.2 V36.6 H9.8 Z M9.8 19.4 L15.4 13.6 H33 L27.2 19.4 M33 13.6 V30.6 L27.2 36.6"/></g>
<path d="M7.8 6.2 V14.8 M3.5 10.5 H12.1" stroke="#7fe0ac" stroke-width="2.1"/></svg>
<svg class="abs" style="left:34.6px;top:464.8px" width="6" height="6" viewBox="0 0 6 6"><polygon points="5.4,0.4 5.4,5.4 0.4,5.4" fill="#8a8a8a"/></svg>
</div>
<div id="le">
<div id="lehdr"></div>
</div>
<div class="abs" style="left:-4.0px;top:503.0px;width:37.8px;height:24.4px;background:#232323;border-radius:4px;box-shadow:inset 0 0 0 1px #3a3a3a;"></div>
<svg class="abs" style="left:0;top:503px" width="20" height="24" viewBox="0 503 20 24"><circle cx="9.1" cy="510.3" r="3.1" fill="#e4e4e4"/><path d="M8 508.6 A1.6 1.6 0 0 1 9.6 507.9" stroke="#333" stroke-width="0.7" fill="none"/><path d="M9.1 513 V517" stroke="#dcdcdc" stroke-width="1.7"/><g fill="none" stroke="#d4d4d4" stroke-width="1.1" stroke-linejoin="round"><path d="M0.6 520.2 L4.6 516.2 H14 L10.6 520.2 Z"/><path d="M0.6 520.2 V523.6 H10.6 V520.2 M10.6 523.6 L14 519.8 V516.2 M5.4 520.4 V523.4"/><path d="M14 520.6 C15.6 521.4 16.2 519.2 17.6 518"/></g><path d="M1.2 520.4 H10.4 L13.4 516.8 H5 Z" fill="#8a8a8a" opacity="0.55"/></svg>
<svg class="abs" style="left:20.8px;top:512.6px" width="10" height="8" viewBox="0 0 10 8"><path d="M1.6 2.2 L5 5.8 L8.4 2.2" fill="none" stroke="#d8d8d8" stroke-width="1.4" stroke-linecap="round" stroke-linejoin="round"/></svg>
<div class="t" style="top:507.5px;color:#e6e6e6;font-size:12.6px;left:42.6px;">View</div>
<div class="t" style="top:507.5px;color:#e6e6e6;font-size:12.6px;left:93.6px;">Add</div>
<div class="abs" style="left:-4.0px;top:541.0px;width:105.0px;height:22.5px;background:#212121;border-radius:4px;box-shadow:inset 0 0 0 1px #3c3c3c;"></div>
<div class="t" style="top:544.0px;color:#e6e6e6;left:4.0px;">Sensors</div>
<svg class="abs" style="left:88.0px;top:548.8px" width="10" height="8" viewBox="0 0 10 8"><path d="M1.6 2.2 L5 5.8 L8.4 2.2" fill="none" stroke="#d8d8d8" stroke-width="1.4" stroke-linecap="round" stroke-linejoin="round"/></svg>
<svg class="abs" style="left:103.0px;top:545.2px" width="15" height="15" viewBox="0 0 15 15"><rect x="0" y="0" width="15" height="15" rx="3" fill="#4772b3"/><path d="M3.2 7.6 L6.2 10.8 L11.9 3.9" fill="none" stroke="#fff" stroke-width="1.9" stroke-linecap="round" stroke-linejoin="round"/></svg>
<div class="t" style="top:543.6px;color:#e6e6e6;left:122.3px;">Sel</div>
<svg class="abs" style="left:176.0px;top:545.2px" width="15" height="15" viewBox="0 0 15 15"><rect x="0" y="0" width="15" height="15" rx="3" fill="#4772b3"/><path d="M3.2 7.6 L6.2 10.8 L11.9 3.9" fill="none" stroke="#fff" stroke-width="1.9" stroke-linecap="round" stroke-linejoin="round"/></svg>
<div class="t" style="top:543.6px;color:#e6e6e6;left:195.3px;">Act</div>
<svg class="abs" style="left:247.0px;top:545.2px" width="15" height="15" viewBox="0 0 15 15"><rect x="0" y="0" width="15" height="15" rx="3" fill="#4772b3"/><path d="M3.2 7.6 L6.2 10.8 L11.9 3.9" fill="none" stroke="#fff" stroke-width="1.9" stroke-linecap="round" stroke-linejoin="round"/></svg>
<div class="t" style="top:543.6px;color:#e6e6e6;left:266.3px;">Link</div>
<svg class="abs" style="left:319.0px;top:545.2px" width="15" height="15" viewBox="0 0 15 15"><rect x="0" y="0" width="15" height="15" rx="3" fill="#4772b3"/><path d="M3.2 7.6 L6.2 10.8 L11.9 3.9" fill="none" stroke="#fff" stroke-width="1.9" stroke-linecap="round" stroke-linejoin="round"/></svg>
<div class="t" style="top:543.6px;color:#e6e6e6;left:338.3px;">State</div>
<div class="abs" style="left:449.4px;top:541.0px;width:141.1px;height:22.5px;background:#212121;border-radius:4px;box-shadow:inset 0 0 0 1px #3c3c3c;"></div>
<div class="t" style="top:544.0px;color:#e6e6e6;left:458.0px;">Controllers</div>
<svg class="abs" style="left:577.5px;top:548.8px" width="10" height="8" viewBox="0 0 10 8"><path d="M1.6 2.2 L5 5.8 L8.4 2.2" fill="none" stroke="#d8d8d8" stroke-width="1.4" stroke-linecap="round" stroke-linejoin="round"/></svg>
<svg class="abs" style="left:591.8px;top:545.2px" width="15" height="15" viewBox="0 0 15 15"><rect x="0" y="0" width="15" height="15" rx="3" fill="#4772b3"/><path d="M3.2 7.6 L6.2 10.8 L11.9 3.9" fill="none" stroke="#fff" stroke-width="1.9" stroke-linecap="round" stroke-linejoin="round"/></svg>
<div class="t" style="top:543.6px;color:#e6e6e6;left:611.4px;">Sel</div>
<svg class="abs" style="left:676.9px;top:545.2px" width="15" height="15" viewBox="0 0 15 15"><rect x="0" y="0" width="15" height="15" rx="3" fill="#4772b3"/><path d="M3.2 7.6 L6.2 10.8 L11.9 3.9" fill="none" stroke="#fff" stroke-width="1.9" stroke-linecap="round" stroke-linejoin="round"/></svg>
<div class="t" style="top:543.6px;color:#e6e6e6;left:696.5px;">Act</div>
<svg class="abs" style="left:760.7px;top:545.2px" width="15" height="15" viewBox="0 0 15 15"><rect x="0" y="0" width="15" height="15" rx="3" fill="#4772b3"/><path d="M3.2 7.6 L6.2 10.8 L11.9 3.9" fill="none" stroke="#fff" stroke-width="1.9" stroke-linecap="round" stroke-linejoin="round"/></svg>
<div class="t" style="top:543.6px;color:#e6e6e6;left:780.3px;">Link</div>
<div class="abs" style="left:914.9px;top:541.0px;width:105.9px;height:22.5px;background:#212121;border-radius:4px;box-shadow:inset 0 0 0 1px #3c3c3c;"></div>
<div class="t" style="top:544.0px;color:#e6e6e6;left:923.0px;">Actuators</div>
<svg class="abs" style="left:1007.8px;top:548.8px" width="10" height="8" viewBox="0 0 10 8"><path d="M1.6 2.2 L5 5.8 L8.4 2.2" fill="none" stroke="#d8d8d8" stroke-width="1.4" stroke-linecap="round" stroke-linejoin="round"/></svg>
<svg class="abs" style="left:1022.0px;top:545.2px" width="15" height="15" viewBox="0 0 15 15"><rect x="0" y="0" width="15" height="15" rx="3" fill="#4772b3"/><path d="M3.2 7.6 L6.2 10.8 L11.9 3.9" fill="none" stroke="#fff" stroke-width="1.9" stroke-linecap="round" stroke-linejoin="round"/></svg>
<div class="t" style="top:543.6px;color:#e6e6e6;left:1041.4px;">Sel</div>
<svg class="abs" style="left:1094.8px;top:545.2px" width="15" height="15" viewBox="0 0 15 15"><rect x="0" y="0" width="15" height="15" rx="3" fill="#4772b3"/><path d="M3.2 7.6 L6.2 10.8 L11.9 3.9" fill="none" stroke="#fff" stroke-width="1.9" stroke-linecap="round" stroke-linejoin="round"/></svg>
<div class="t" style="top:543.6px;color:#e6e6e6;left:1114.2px;">Act</div>
<svg class="abs" style="left:1166.2px;top:545.2px" width="15" height="15" viewBox="0 0 15 15"><rect x="0" y="0" width="15" height="15" rx="3" fill="#4772b3"/><path d="M3.2 7.6 L6.2 10.8 L11.9 3.9" fill="none" stroke="#fff" stroke-width="1.9" stroke-linecap="round" stroke-linejoin="round"/></svg>
<div class="t" style="top:543.6px;color:#e6e6e6;left:1185.6px;">Link</div>
<svg class="abs" style="left:1238.3px;top:545.2px" width="15" height="15" viewBox="0 0 15 15"><rect x="0" y="0" width="15" height="15" rx="3" fill="#4772b3"/><path d="M3.2 7.6 L6.2 10.8 L11.9 3.9" fill="none" stroke="#fff" stroke-width="1.9" stroke-linecap="round" stroke-linejoin="round"/></svg>
<div class="t" style="top:543.6px;color:#e6e6e6;left:1257.7px;">State</div>
<div class="abs" style="left:-4.0px;top:570.0px;width:238.0px;height:21.0px;background:#4772b3;border-radius:4px;border-top-right-radius:0;border-bottom-right-radius:0;"></div>
<div class="t" style="top:571.9px;left:15.0px;width:200px;text-align:center;color:#fff;text-shadow:0 1px 1.5px rgba(0,0,0,0.45)">Ружье</div>
<div class="abs" style="left:234.0px;top:570.0px;width:156.5px;height:21.0px;background:#222222;border-radius:4px;box-shadow:inset 0 0 0 1px #3a3a3a;border-top-left-radius:0;border-bottom-left-radius:0;"></div>
<div class="t" style="top:571.9px;color:#e6e6e6;left:243.0px;">Add Sensor</div>
<svg class="abs" style="left:378.0px;top:577.3px" width="10" height="8" viewBox="0 0 10 8"><path d="M1.6 2.2 L5 5.8 L8.4 2.2" fill="none" stroke="#d8d8d8" stroke-width="1.4" stroke-linecap="round" stroke-linejoin="round"/></svg>
<svg class="abs" style="left:0;top:0;overflow:visible" width="1" height="1"><polygon points="454.9,576.0 454.9,583.0 461.9,579.5" fill="#e0e0e0"/></svg>
<div class="abs" style="left:475.9px;top:570.0px;width:222.1px;height:21.0px;background:#4772b3;border-radius:4px;border-top-right-radius:0;border-bottom-right-radius:0;"></div>
<div class="t" style="top:571.9px;left:487.0px;width:200px;text-align:center;color:#fff;text-shadow:0 1px 1.5px rgba(0,0,0,0.45)">Ружье</div>
<div class="abs" style="left:698.0px;top:570.0px;width:145.8px;height:21.0px;background:#222222;border-radius:4px;box-shadow:inset 0 0 0 1px #3a3a3a;border-top-left-radius:0;border-bottom-left-radius:0;"></div>
<div class="t" style="top:571.9px;color:#e6e6e6;left:707.0px;">Add Controller</div>
<svg class="abs" style="left:831.3px;top:577.3px" width="10" height="8" viewBox="0 0 10 8"><path d="M1.6 2.2 L5 5.8 L8.4 2.2" fill="none" stroke="#d8d8d8" stroke-width="1.4" stroke-linecap="round" stroke-linejoin="round"/></svg>
<div class="abs" style="left:914.9px;top:570.0px;width:237.9px;height:21.0px;background:#4772b3;border-radius:4px;border-top-right-radius:0;border-bottom-right-radius:0;"></div>
<div class="t" style="top:571.9px;left:933.8px;width:200px;text-align:center;color:#fff;text-shadow:0 1px 1.5px rgba(0,0,0,0.45)">Ружье</div>
<div class="abs" style="left:1152.8px;top:570.0px;width:156.9px;height:21.0px;background:#222222;border-radius:4px;box-shadow:inset 0 0 0 1px #3a3a3a;border-top-left-radius:0;border-bottom-left-radius:0;"></div>
<div class="t" style="top:571.9px;color:#e6e6e6;left:1161.8px;">Add Actuator</div>
<svg class="abs" style="left:1297.2px;top:577.3px" width="10" height="8" viewBox="0 0 10 8"><path d="M1.6 2.2 L5 5.8 L8.4 2.2" fill="none" stroke="#d8d8d8" stroke-width="1.4" stroke-linecap="round" stroke-linejoin="round"/></svg>
<div class="abs" style="left:-4.0px;top:608.0px;width:367.6px;height:97.4px;background:#212121;border-radius:4px;box-shadow:inset 0 0 0 1px #363636;"></div>
<div class="abs" style="left:0.0px;top:640.4px;width:363.0px;height:1px;background:#363636"></div>
<div class="abs" style="left:0.0px;top:672.2px;width:363.0px;height:1px;background:#363636"></div>
<svg class="abs" style="left:0;top:0;overflow:visible" width="1" height="1"><polygon points="7.0,621.0 16.6,621.0 11.8,628.0" fill="#fff"/></svg>
<div class="abs" style="left:31.2px;top:613.4px;width:86.4px;height:22.2px;background:#262626;border-radius:4px;box-shadow:inset 0 0 0 1px #3d3d3d;"></div>
<div class="t" style="top:616.4px;color:#e6e6e6;left:40.0px;">Message</div>
<svg class="abs" style="left:104.6px;top:621.0px" width="10" height="8" viewBox="0 0 10 8"><path d="M1.6 2.2 L5 5.8 L8.4 2.2" fill="none" stroke="#d8d8d8" stroke-width="1.4" stroke-linecap="round" stroke-linejoin="round"/></svg>
<div class="abs" style="left:125.7px;top:613.4px;width:86.5px;height:22.2px;background:#1a1a1a;border-radius:4px;box-shadow:inset 0 0 0 1px #3d3d3d;"></div>
<div class="t" style="top:616.4px;color:#e6e6e6;left:134.3px;">Message</div>
<svg class="abs" style="left:223.3px;top:615.2px" width="18" height="18" viewBox="0 0 18 18"><g fill="none" stroke="#c8c8c8" stroke-width="1.15" stroke-linejoin="round" stroke-linecap="round"><path d="M9.6 2.2 L12.2 1.4 L16.4 5.6 L15.6 8.2 L14.3 7.7 L11.6 10.4 L11.9 13.2 L10.6 14.1 L3.8 7.3 L4.7 6 L7.5 6.3 L10.2 3.6 Z"/><path d="M7 10.9 L1.6 16.4"/></g></svg>
<div class="abs" style="left:251.3px;top:613.4px;width:45.5px;height:22.2px;background:#545454;border-radius:4px;"></div>
<div class="abs" style="left:273.6px;top:613.4px;width:1px;height:22.2px;background:#3d3d3d"></div>
<svg class="abs" style="left:0;top:0;overflow:visible" width="1" height="1"><polygon points="258.2,628.3 267.2,628.3 262.7,621.3" fill="#e8e8e8"/></svg>
<svg class="abs" style="left:0;top:0;overflow:visible" width="1" height="1"><polygon points="280.9,621.3 289.9,621.3 285.4,628.3" fill="#e8e8e8"/></svg>
<svg class="abs" style="left:305.6px;top:616.7px" width="15" height="15" viewBox="0 0 15 15"><rect x="0" y="0" width="15" height="15" rx="3" fill="#4772b3"/><path d="M3.2 7.6 L6.2 10.8 L11.9 3.9" fill="none" stroke="#fff" stroke-width="1.9" stroke-linecap="round" stroke-linejoin="round"/></svg>
<div class="abs" style="left:336.0px;top:613.4px;width:22.8px;height:22.2px;background:#545454;border-radius:4px;"></div>
<svg class="abs" style="left:341.4px;top:618.5px" width="12" height="12" viewBox="0 0 12 12"><path d="M1.8 1.8 L10.2 10.2 M10.2 1.8 L1.8 10.2" stroke="#e8e8e8" stroke-width="1.3" stroke-linecap="round"/></svg>
<div class="abs" style="left:0.6px;top:645.4px;width:44.8px;height:22.6px;background:#545454;border-radius:4px;"></div>
<div class="abs" style="left:22.5px;top:645.4px;width:1px;height:22.6px;background:#3d3d3d"></div>
<svg class="abs" style="left:0;top:0;overflow:visible" width="1" height="1"><polygon points="7.3,660.5 16.3,660.5 11.8,653.5" fill="#e8e8e8"/></svg>
<svg class="abs" style="left:0;top:0;overflow:visible" width="1" height="1"><polygon points="29.7,653.5 38.7,653.5 34.2,660.5" fill="#e8e8e8"/></svg>
<div class="abs" style="left:46.6px;top:645.4px;width:107.0px;height:22.6px;background:#3a3a3a;border-radius:4px;"></div>
<div class="t" style="top:648.5px;color:#8f8f8f;left:65.2px;">Skip</div>
<div class="t" style="top:648.5px;color:#8f8f8f;left:129.0px;">0</div>
<div class="abs" style="left:162.4px;top:645.4px;width:94.2px;height:22.6px;background:#545454;border-radius:4px;"></div>
<div class="abs" style="left:208px;top:645.4px;width:1px;height:22.6px;background:#3d3d3d"></div>
<div class="t" style="top:648.5px;color:#e6e6e6;left:85.4px;width:200px;text-align:center;">Level</div>
<div class="t" style="top:648.5px;color:#e6e6e6;left:132.3px;width:200px;text-align:center;">Tap</div>
<div class="abs" style="left:264.6px;top:645.4px;width:94.2px;height:22.6px;background:#545454;border-radius:4px;"></div>
<div class="t" style="top:648.5px;color:#e6e6e6;left:211.7px;width:200px;text-align:center;">Invert</div>
<div class="t" style="top:680.8px;color:#e6e6e6;left:1.6px;">Subject:</div>
<div class="abs" style="left:89.6px;top:678.6px;width:269.2px;height:22.0px;background:#1a1a1a;border-radius:4px;box-shadow:inset 0 0 0 1px #3d3d3d;"></div>
<div class="t" style="top:680.5px;color:#e6e6e6;left:98.6px;">1</div>
<div class="abs" style="left:-4.0px;top:710.2px;width:367.6px;height:89.8px;background:#212121;border-radius:4px;box-shadow:inset 0 0 0 1px #363636;"></div>
<svg class="abs" style="left:0;top:0;overflow:visible" width="1" height="1"><polygon points="7.0,722.6 16.6,722.6 11.8,729.6" fill="#fff"/></svg>
<div class="abs" style="left:31.2px;top:715.0px;width:86.4px;height:22.2px;background:#262626;border-radius:4px;box-shadow:inset 0 0 0 1px #3d3d3d;"></div>
<div class="t" style="top:718.0px;color:#e6e6e6;left:40.0px;">Always</div>
<svg class="abs" style="left:104.6px;top:722.6px" width="10" height="8" viewBox="0 0 10 8"><path d="M1.6 2.2 L5 5.8 L8.4 2.2" fill="none" stroke="#d8d8d8" stroke-width="1.4" stroke-linecap="round" stroke-linejoin="round"/></svg>
<div class="abs" style="left:125.7px;top:715.0px;width:86.5px;height:22.2px;background:#1a1a1a;border-radius:4px;box-shadow:inset 0 0 0 1px #3d3d3d;"></div>
<div class="t" style="top:718.0px;color:#e6e6e6;left:134.3px;">Always</div>
<svg class="abs" style="left:223.3px;top:716.8px" width="18" height="18" viewBox="0 0 18 18"><g fill="none" stroke="#c8c8c8" stroke-width="1.15" stroke-linejoin="round" stroke-linecap="round"><path d="M9.6 2.2 L12.2 1.4 L16.4 5.6 L15.6 8.2 L14.3 7.7 L11.6 10.4 L11.9 13.2 L10.6 14.1 L3.8 7.3 L4.7 6 L7.5 6.3 L10.2 3.6 Z"/><path d="M7 10.9 L1.6 16.4"/></g></svg>
<div class="abs" style="left:251.3px;top:715.0px;width:45.5px;height:22.2px;background:#545454;border-radius:4px;"></div>
<div class="abs" style="left:273.6px;top:715.0px;width:1px;height:22.2px;background:#3d3d3d"></div>
<svg class="abs" style="left:0;top:0;overflow:visible" width="1" height="1"><polygon points="258.2,729.9 267.2,729.9 262.7,722.9" fill="#e8e8e8"/></svg>
<svg class="abs" style="left:0;top:0;overflow:visible" width="1" height="1"><polygon points="280.9,722.9 289.9,722.9 285.4,729.9" fill="#e8e8e8"/></svg>
<svg class="abs" style="left:305.6px;top:718.3px" width="15" height="15" viewBox="0 0 15 15"><rect x="0" y="0" width="15" height="15" rx="3" fill="#4772b3"/><path d="M3.2 7.6 L6.2 10.8 L11.9 3.9" fill="none" stroke="#fff" stroke-width="1.9" stroke-linecap="round" stroke-linejoin="round"/></svg>
<div class="abs" style="left:336.0px;top:715.0px;width:22.8px;height:22.2px;background:#545454;border-radius:4px;"></div>
<svg class="abs" style="left:341.4px;top:720.1px" width="12" height="12" viewBox="0 0 12 12"><path d="M1.8 1.8 L10.2 10.2 M10.2 1.8 L1.8 10.2" stroke="#e8e8e8" stroke-width="1.3" stroke-linecap="round"/></svg>
<div class="abs" style="left:475.4px;top:608.0px;width:342.4px;height:72.9px;background:#212121;border-radius:4px;box-shadow:inset 0 0 0 1px #363636;"></div>
<div class="abs" style="left:476.0px;top:670.2px;width:341.0px;height:1px;background:#363636"></div>
<svg class="abs" style="left:0;top:0;overflow:visible" width="1" height="1"><polygon points="486.8,621.0 496.4,621.0 491.6,628.0" fill="#fff"/></svg>
<div class="abs" style="left:511.4px;top:613.4px;width:73.6px;height:22.2px;background:#262626;border-radius:4px;box-shadow:inset 0 0 0 1px #3d3d3d;"></div>
<div class="t" style="top:616.4px;color:#e6e6e6;left:520.0px;">And</div>
<svg class="abs" style="left:572.0px;top:621.0px" width="10" height="8" viewBox="0 0 10 8"><path d="M1.6 2.2 L5 5.8 L8.4 2.2" fill="none" stroke="#d8d8d8" stroke-width="1.4" stroke-linecap="round" stroke-linejoin="round"/></svg>
<div class="abs" style="left:591.9px;top:613.4px;width:76.1px;height:22.2px;background:#1a1a1a;border-radius:4px;box-shadow:inset 0 0 0 1px #3d3d3d;"></div>
<div class="t" style="top:616.4px;color:#e6e6e6;left:601.0px;">And</div>
<div class="abs" style="left:675.6px;top:613.4px;width:22.0px;height:22.2px;background:#545454;border-radius:4px;"></div>
<svg class="abs" style="left:680.2px;top:615.9px" width="13" height="18" viewBox="0 0 13 18"><path d="M0.8 0.6 H12 V17.4 L6.4 12.2 L0.8 17.4 Z" fill="#e6e6e6"/></svg>
<div class="abs" style="left:706.4px;top:613.4px;width:45.4px;height:22.2px;background:#545454;border-radius:4px;"></div>
<div class="abs" style="left:728.6px;top:613.4px;width:1px;height:22.2px;background:#3d3d3d"></div>
<svg class="abs" style="left:0;top:0;overflow:visible" width="1" height="1"><polygon points="713.2,628.3 722.2,628.3 717.8,621.3" fill="#e8e8e8"/></svg>
<svg class="abs" style="left:0;top:0;overflow:visible" width="1" height="1"><polygon points="735.9,621.3 744.9,621.3 740.4,628.3" fill="#e8e8e8"/></svg>
<svg class="abs" style="left:760.7px;top:616.7px" width="15" height="15" viewBox="0 0 15 15"><rect x="0" y="0" width="15" height="15" rx="3" fill="#4772b3"/><path d="M3.2 7.6 L6.2 10.8 L11.9 3.9" fill="none" stroke="#fff" stroke-width="1.9" stroke-linecap="round" stroke-linejoin="round"/></svg>
<div class="abs" style="left:791.2px;top:613.4px;width:22.6px;height:22.2px;background:#545454;border-radius:4px;"></div>
<svg class="abs" style="left:796.5px;top:618.5px" width="12" height="12" viewBox="0 0 12 12"><path d="M1.8 1.8 L10.2 10.2 M10.2 1.8 L1.8 10.2" stroke="#e8e8e8" stroke-width="1.3" stroke-linecap="round"/></svg>
<div class="t" style="left:481px;top:646.8px;letter-spacing:-0.1px">Controller visible at:</div>
<div class="abs" style="left:617.0px;top:643.3px;width:196.8px;height:23.5px;background:#262626;border-radius:4px;box-shadow:inset 0 0 0 1px #3d3d3d;"></div>
<div class="t" style="top:646.8px;color:#e6e6e6;left:626.0px;">State 1</div>
<svg class="abs" style="left:800.8px;top:651.6px" width="10" height="8" viewBox="0 0 10 8"><path d="M1.6 2.2 L5 5.8 L8.4 2.2" fill="none" stroke="#d8d8d8" stroke-width="1.4" stroke-linecap="round" stroke-linejoin="round"/></svg>
<div class="abs" style="left:475.4px;top:684.8px;width:342.4px;height:72.9px;background:#212121;border-radius:4px;box-shadow:inset 0 0 0 1px #363636;"></div>
<div class="abs" style="left:476.0px;top:747.0px;width:341.0px;height:1px;background:#363636"></div>
<svg class="abs" style="left:0;top:0;overflow:visible" width="1" height="1"><polygon points="486.8,697.8 496.4,697.8 491.6,704.8" fill="#fff"/></svg>
<div class="abs" style="left:511.4px;top:690.2px;width:73.6px;height:22.2px;background:#262626;border-radius:4px;box-shadow:inset 0 0 0 1px #3d3d3d;"></div>
<div class="t" style="top:693.2px;color:#e6e6e6;left:520.0px;">And</div>
<svg class="abs" style="left:572.0px;top:697.8px" width="10" height="8" viewBox="0 0 10 8"><path d="M1.6 2.2 L5 5.8 L8.4 2.2" fill="none" stroke="#d8d8d8" stroke-width="1.4" stroke-linecap="round" stroke-linejoin="round"/></svg>
<div class="abs" style="left:591.9px;top:690.2px;width:76.1px;height:22.2px;background:#1a1a1a;border-radius:4px;box-shadow:inset 0 0 0 1px #3d3d3d;"></div>
<div class="t" style="top:693.2px;color:#e6e6e6;left:601.0px;">And.001</div>
<div class="abs" style="left:675.6px;top:690.2px;width:22.0px;height:22.2px;background:#545454;border-radius:4px;"></div>
<svg class="abs" style="left:680.2px;top:692.7px" width="13" height="18" viewBox="0 0 13 18"><path d="M0.8 0.6 H12 V17.4 L6.4 12.2 L0.8 17.4 Z" fill="#e6e6e6"/></svg>
<div class="abs" style="left:706.4px;top:690.2px;width:45.4px;height:22.2px;background:#545454;border-radius:4px;"></div>
<div class="abs" style="left:728.6px;top:690.2px;width:1px;height:22.2px;background:#3d3d3d"></div>
<svg class="abs" style="left:0;top:0;overflow:visible" width="1" height="1"><polygon points="713.2,705.1 722.2,705.1 717.8,698.1" fill="#e8e8e8"/></svg>
<svg class="abs" style="left:0;top:0;overflow:visible" width="1" height="1"><polygon points="735.9,698.1 744.9,698.1 740.4,705.1" fill="#e8e8e8"/></svg>
<svg class="abs" style="left:760.7px;top:693.5px" width="15" height="15" viewBox="0 0 15 15"><rect x="0" y="0" width="15" height="15" rx="3" fill="#4772b3"/><path d="M3.2 7.6 L6.2 10.8 L11.9 3.9" fill="none" stroke="#fff" stroke-width="1.9" stroke-linecap="round" stroke-linejoin="round"/></svg>
<div class="abs" style="left:791.2px;top:690.2px;width:22.6px;height:22.2px;background:#545454;border-radius:4px;"></div>
<svg class="abs" style="left:796.5px;top:695.3px" width="12" height="12" viewBox="0 0 12 12"><path d="M1.8 1.8 L10.2 10.2 M10.2 1.8 L1.8 10.2" stroke="#e8e8e8" stroke-width="1.3" stroke-linecap="round"/></svg>
<div class="t" style="left:481px;top:723.6px;letter-spacing:-0.1px">Controller visible at:</div>
<div class="abs" style="left:617.0px;top:720.1px;width:196.8px;height:23.5px;background:#262626;border-radius:4px;box-shadow:inset 0 0 0 1px #3d3d3d;"></div>
<div class="t" style="top:723.6px;color:#e6e6e6;left:626.0px;">State 1</div>
<svg class="abs" style="left:800.8px;top:728.4px" width="10" height="8" viewBox="0 0 10 8"><path d="M1.6 2.2 L5 5.8 L8.4 2.2" fill="none" stroke="#d8d8d8" stroke-width="1.4" stroke-linecap="round" stroke-linejoin="round"/></svg>
<div class="abs" style="left:940.7px;top:608.0px;width:369.1px;height:65.0px;background:#212121;border-radius:4px;box-shadow:inset 0 0 0 1px #363636;"></div>
<div class="abs" style="left:941.0px;top:640.4px;width:368.0px;height:1px;background:#363636"></div>
<svg class="abs" style="left:0;top:0;overflow:visible" width="1" height="1"><polygon points="952.2,621.0 961.8,621.0 957.0,628.0" fill="#fff"/></svg>
<div class="abs" style="left:976.2px;top:613.4px;width:86.6px;height:22.2px;background:#262626;border-radius:4px;box-shadow:inset 0 0 0 1px #3d3d3d;"></div>
<div class="t" style="top:616.4px;color:#e6e6e6;left:985.0px;">Visibility</div>
<svg class="abs" style="left:1049.8px;top:621.0px" width="10" height="8" viewBox="0 0 10 8"><path d="M1.6 2.2 L5 5.8 L8.4 2.2" fill="none" stroke="#d8d8d8" stroke-width="1.4" stroke-linecap="round" stroke-linejoin="round"/></svg>
<div class="abs" style="left:1071.4px;top:613.4px;width:87.2px;height:22.2px;background:#1a1a1a;border-radius:4px;box-shadow:inset 0 0 0 1px #3d3d3d;"></div>
<div class="t" style="top:616.4px;color:#e6e6e6;left:1080.0px;">Visibility</div>
<svg class="abs" style="left:1169.4px;top:615.2px" width="18" height="18" viewBox="0 0 18 18"><g fill="none" stroke="#c8c8c8" stroke-width="1.15" stroke-linejoin="round" stroke-linecap="round"><path d="M9.6 2.2 L12.2 1.4 L16.4 5.6 L15.6 8.2 L14.3 7.7 L11.6 10.4 L11.9 13.2 L10.6 14.1 L3.8 7.3 L4.7 6 L7.5 6.3 L10.2 3.6 Z"/><path d="M7 10.9 L1.6 16.4"/></g></svg>
<div class="abs" style="left:1197.4px;top:613.4px;width:46.0px;height:22.2px;background:#545454;border-radius:4px;"></div>
<div class="abs" style="left:1219.9px;top:613.4px;width:1px;height:22.2px;background:#3d3d3d"></div>
<svg class="abs" style="left:0;top:0;overflow:visible" width="1" height="1"><polygon points="1204.4,628.3 1213.4,628.3 1208.9,621.3" fill="#e8e8e8"/></svg>
<svg class="abs" style="left:0;top:0;overflow:visible" width="1" height="1"><polygon points="1227.4,621.3 1236.4,621.3 1231.9,628.3" fill="#e8e8e8"/></svg>
<svg class="abs" style="left:1251.7px;top:616.7px" width="15" height="15" viewBox="0 0 15 15"><rect x="0" y="0" width="15" height="15" rx="3" fill="#4772b3"/><path d="M3.2 7.6 L6.2 10.8 L11.9 3.9" fill="none" stroke="#fff" stroke-width="1.9" stroke-linecap="round" stroke-linejoin="round"/></svg>
<div class="abs" style="left:1282.5px;top:613.4px;width:22.3px;height:22.2px;background:#545454;border-radius:4px;"></div>
<svg class="abs" style="left:1287.7px;top:618.5px" width="12" height="12" viewBox="0 0 12 12"><path d="M1.8 1.8 L10.2 10.2 M10.2 1.8 L1.8 10.2" stroke="#e8e8e8" stroke-width="1.3" stroke-linecap="round"/></svg>
<svg class="abs" style="left:946.0px;top:649.0px" width="15" height="15" viewBox="0 0 15 15"><rect x="0" y="0" width="15" height="15" rx="3" fill="#545454"/></svg>
<div class="t" style="top:648.6px;color:#e6e6e6;left:966.0px;">Visible</div>
<svg class="abs" style="left:1068.0px;top:649.0px" width="15" height="15" viewBox="0 0 15 15"><rect x="0" y="0" width="15" height="15" rx="3" fill="#545454"/></svg>
<div class="t" style="top:648.6px;color:#e6e6e6;left:1088.0px;">Occlusion</div>
<svg class="abs" style="left:1190.7px;top:649.0px" width="15" height="15" viewBox="0 0 15 15"><rect x="0" y="0" width="15" height="15" rx="3" fill="#545454"/></svg>
<div class="t" style="top:648.6px;color:#e6e6e6;left:1210.8px;">Children</div>
<div class="abs" style="left:940.7px;top:678.0px;width:369.1px;height:65.0px;background:#212121;border-radius:4px;box-shadow:inset 0 0 0 1px #363636;"></div>
<div class="abs" style="left:941.0px;top:710.4px;width:368.0px;height:1px;background:#363636"></div>
<svg class="abs" style="left:0;top:0;overflow:visible" width="1" height="1"><polygon points="952.2,691.0 961.8,691.0 957.0,698.0" fill="#fff"/></svg>
<div class="abs" style="left:976.2px;top:683.4px;width:86.6px;height:22.2px;background:#262626;border-radius:4px;box-shadow:inset 0 0 0 1px #3d3d3d;"></div>
<div class="t" style="top:686.4px;color:#e6e6e6;left:985.0px;">Visibility</div>
<svg class="abs" style="left:1049.8px;top:691.0px" width="10" height="8" viewBox="0 0 10 8"><path d="M1.6 2.2 L5 5.8 L8.4 2.2" fill="none" stroke="#d8d8d8" stroke-width="1.4" stroke-linecap="round" stroke-linejoin="round"/></svg>
<div class="abs" style="left:1071.4px;top:683.4px;width:87.2px;height:22.2px;background:#1a1a1a;border-radius:4px;box-shadow:inset 0 0 0 1px #3d3d3d;"></div>
<div class="t" style="top:686.4px;color:#e6e6e6;left:1080.0px;">Visibility....</div>
<svg class="abs" style="left:1169.4px;top:685.2px" width="18" height="18" viewBox="0 0 18 18"><g fill="none" stroke="#c8c8c8" stroke-width="1.15" stroke-linejoin="round" stroke-linecap="round"><path d="M9.6 2.2 L12.2 1.4 L16.4 5.6 L15.6 8.2 L14.3 7.7 L11.6 10.4 L11.9 13.2 L10.6 14.1 L3.8 7.3 L4.7 6 L7.5 6.3 L10.2 3.6 Z"/><path d="M7 10.9 L1.6 16.4"/></g></svg>
<div class="abs" style="left:1197.4px;top:683.4px;width:46.0px;height:22.2px;background:#545454;border-radius:4px;"></div>
<div class="abs" style="left:1219.9px;top:683.4px;width:1px;height:22.2px;background:#3d3d3d"></div>
<svg class="abs" style="left:0;top:0;overflow:visible" width="1" height="1"><polygon points="1204.4,698.3 1213.4,698.3 1208.9,691.3" fill="#e8e8e8"/></svg>
<svg class="abs" style="left:0;top:0;overflow:visible" width="1" height="1"><polygon points="1227.4,691.3 1236.4,691.3 1231.9,698.3" fill="#e8e8e8"/></svg>
<svg class="abs" style="left:1251.7px;top:686.7px" width="15" height="15" viewBox="0 0 15 15"><rect x="0" y="0" width="15" height="15" rx="3" fill="#4772b3"/><path d="M3.2 7.6 L6.2 10.8 L11.9 3.9" fill="none" stroke="#fff" stroke-width="1.9" stroke-linecap="round" stroke-linejoin="round"/></svg>
<div class="abs" style="left:1282.5px;top:683.4px;width:22.3px;height:22.2px;background:#545454;border-radius:4px;"></div>
<svg class="abs" style="left:1287.7px;top:688.5px" width="12" height="12" viewBox="0 0 12 12"><path d="M1.8 1.8 L10.2 10.2 M10.2 1.8 L1.8 10.2" stroke="#e8e8e8" stroke-width="1.3" stroke-linecap="round"/></svg>
<svg class="abs" style="left:946.0px;top:719.0px" width="15" height="15" viewBox="0 0 15 15"><rect x="0" y="0" width="15" height="15" rx="3" fill="#4772b3"/><path d="M3.2 7.6 L6.2 10.8 L11.9 3.9" fill="none" stroke="#fff" stroke-width="1.9" stroke-linecap="round" stroke-linejoin="round"/></svg>
<div class="t" style="top:718.6px;color:#e6e6e6;left:964.6px;">Visible</div>
<svg class="abs" style="left:1068.0px;top:719.0px" width="15" height="15" viewBox="0 0 15 15"><rect x="0" y="0" width="15" height="15" rx="3" fill="#545454"/></svg>
<div class="t" style="top:718.6px;color:#e6e6e6;left:1086.8px;">Occlusion</div>
<svg class="abs" style="left:1190.7px;top:719.0px" width="15" height="15" viewBox="0 0 15 15"><rect x="0" y="0" width="15" height="15" rx="3" fill="#545454"/></svg>
<div class="t" style="top:718.6px;color:#e6e6e6;left:1209.6px;">Children</div>
<svg class="abs" style="left:371.2px;top:609.3px" width="20" height="20" viewBox="0 0 20 20"><g fill="none" transform="rotate(-45 10 10)"><rect x="0.6" y="6.3" width="10.8" height="7.4" rx="3.7" stroke="#e4e4e4" stroke-width="1.5"/><rect x="8.6" y="6.3" width="10.8" height="7.4" rx="3.7" stroke="#262626" stroke-width="3.4"/><rect x="8.6" y="6.3" width="10.8" height="7.4" rx="3.7" stroke="#e4e4e4" stroke-width="1.5"/><path d="M7.6 6.3 H10.6" stroke="#262626" stroke-width="3"/><path d="M4.3 6.3 H7.7 A3.7 3.7 0 0 1 11.4 10" stroke="#e4e4e4" stroke-width="1.5"/></g></svg>
<svg class="abs" style="left:448.9px;top:609.3px" width="20" height="20" viewBox="0 0 20 20"><g fill="none" transform="rotate(-45 10 10)"><rect x="0.6" y="6.3" width="10.8" height="7.4" rx="3.7" stroke="#e4e4e4" stroke-width="1.5"/><rect x="8.6" y="6.3" width="10.8" height="7.4" rx="3.7" stroke="#262626" stroke-width="3.4"/><rect x="8.6" y="6.3" width="10.8" height="7.4" rx="3.7" stroke="#e4e4e4" stroke-width="1.5"/><path d="M7.6 6.3 H10.6" stroke="#262626" stroke-width="3"/><path d="M4.3 6.3 H7.7 A3.7 3.7 0 0 1 11.4 10" stroke="#e4e4e4" stroke-width="1.5"/></g></svg>
<svg class="abs" style="left:448.9px;top:686.6px" width="20" height="20" viewBox="0 0 20 20"><g fill="none" transform="rotate(-45 10 10)"><rect x="0.6" y="6.3" width="10.8" height="7.4" rx="3.7" stroke="#e4e4e4" stroke-width="1.5"/><rect x="8.6" y="6.3" width="10.8" height="7.4" rx="3.7" stroke="#262626" stroke-width="3.4"/><rect x="8.6" y="6.3" width="10.8" height="7.4" rx="3.7" stroke="#e4e4e4" stroke-width="1.5"/><path d="M7.6 6.3 H10.6" stroke="#262626" stroke-width="3"/><path d="M4.3 6.3 H7.7 A3.7 3.7 0 0 1 11.4 10" stroke="#e4e4e4" stroke-width="1.5"/></g></svg>
<svg class="abs" style="left:371.2px;top:711.9px" width="20" height="20" viewBox="0 0 20 20"><g fill="none" transform="rotate(-45 10 10)"><rect x="0.6" y="6.3" width="10.8" height="7.4" rx="3.7" stroke="#e4e4e4" stroke-width="1.5"/><rect x="8.6" y="6.3" width="10.8" height="7.4" rx="3.7" stroke="#262626" stroke-width="3.4"/><rect x="8.6" y="6.3" width="10.8" height="7.4" rx="3.7" stroke="#e4e4e4" stroke-width="1.5"/><path d="M7.6 6.3 H10.6" stroke="#262626" stroke-width="3"/><path d="M4.3 6.3 H7.7 A3.7 3.7 0 0 1 11.4 10" stroke="#e4e4e4" stroke-width="1.5"/></g></svg>
<svg class="abs" style="left:825.3px;top:609.3px" width="20" height="20" viewBox="0 0 20 20"><g fill="none" transform="rotate(-45 10 10)"><rect x="0.6" y="6.3" width="10.8" height="7.4" rx="3.7" stroke="#e4e4e4" stroke-width="1.5"/><rect x="8.6" y="6.3" width="10.8" height="7.4" rx="3.7" stroke="#262626" stroke-width="3.4"/><rect x="8.6" y="6.3" width="10.8" height="7.4" rx="3.7" stroke="#e4e4e4" stroke-width="1.5"/><path d="M7.6 6.3 H10.6" stroke="#262626" stroke-width="3"/><path d="M4.3 6.3 H7.7 A3.7 3.7 0 0 1 11.4 10" stroke="#e4e4e4" stroke-width="1.5"/></g></svg>
<svg class="abs" style="left:913.8px;top:609.3px" width="20" height="20" viewBox="0 0 20 20"><g fill="none" transform="rotate(-45 10 10)"><rect x="0.6" y="6.3" width="10.8" height="7.4" rx="3.7" stroke="#e4e4e4" stroke-width="1.5"/><rect x="8.6" y="6.3" width="10.8" height="7.4" rx="3.7" stroke="#262626" stroke-width="3.4"/><rect x="8.6" y="6.3" width="10.8" height="7.4" rx="3.7" stroke="#e4e4e4" stroke-width="1.5"/><path d="M7.6 6.3 H10.6" stroke="#262626" stroke-width="3"/><path d="M4.3 6.3 H7.7 A3.7 3.7 0 0 1 11.4 10" stroke="#e4e4e4" stroke-width="1.5"/></g></svg>
<svg class="abs" style="left:825.3px;top:686.6px" width="20" height="20" viewBox="0 0 20 20"><g fill="none" transform="rotate(-45 10 10)"><rect x="0.6" y="6.3" width="10.8" height="7.4" rx="3.7" stroke="#e4e4e4" stroke-width="1.5"/><rect x="8.6" y="6.3" width="10.8" height="7.4" rx="3.7" stroke="#262626" stroke-width="3.4"/><rect x="8.6" y="6.3" width="10.8" height="7.4" rx="3.7" stroke="#e4e4e4" stroke-width="1.5"/><path d="M7.6 6.3 H10.6" stroke="#262626" stroke-width="3"/><path d="M4.3 6.3 H7.7 A3.7 3.7 0 0 1 11.4 10" stroke="#e4e4e4" stroke-width="1.5"/></g></svg>
<svg class="abs" style="left:913.8px;top:679.5px" width="20" height="20" viewBox="0 0 20 20"><g fill="none" transform="rotate(-45 10 10)"><rect x="0.6" y="6.3" width="10.8" height="7.4" rx="3.7" stroke="#e4e4e4" stroke-width="1.5"/><rect x="8.6" y="6.3" width="10.8" height="7.4" rx="3.7" stroke="#262626" stroke-width="3.4"/><rect x="8.6" y="6.3" width="10.8" height="7.4" rx="3.7" stroke="#e4e4e4" stroke-width="1.5"/><path d="M7.6 6.3 H10.6" stroke="#262626" stroke-width="3"/><path d="M4.3 6.3 H7.7 A3.7 3.7 0 0 1 11.4 10" stroke="#e4e4e4" stroke-width="1.5"/></g></svg>
<svg class="abs" style="left:0;top:496px" width="1313" height="236" viewBox="0 496 1313 236"><g fill="none" stroke="#8c8c8c" stroke-width="1">
<path d="M386 619.3 H454"/>
<path d="M386 721.5 C416 721.5 424 697 454 697"/>
<path d="M840 619.3 H919"/>
<path d="M840 619.5 C851 620 858 632 863.3 643.3 S869 658 871.7 665 L880 690 L896.3 736"/>
<path d="M840 696.7 C866 696.7 884 690 919 689.2"/>
</g></svg>
</body>
</html>
